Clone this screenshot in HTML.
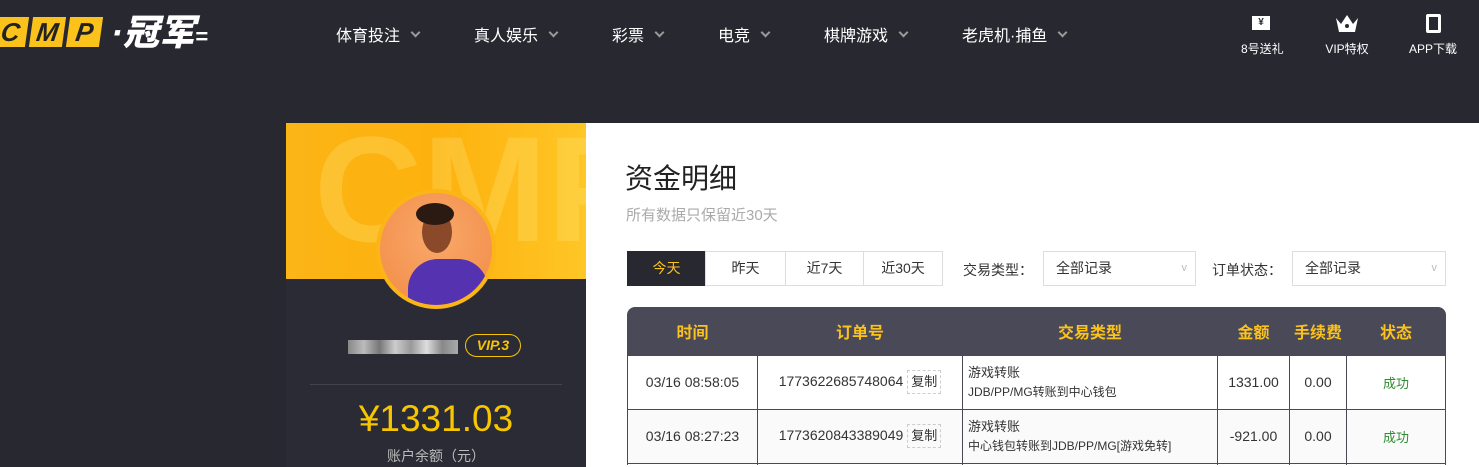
<!DOCTYPE html>
<html style="overflow:hidden;height:467px"><head><meta charset="utf-8"><style>
*{margin:0;padding:0;box-sizing:border-box}
body{width:1479px;height:467px;overflow:hidden;background:#282831;font-family:"Liberation Sans","Noto Sans CJK SC",sans-serif;position:relative}
.a{position:absolute;white-space:nowrap}
.nav{color:#fff;font-size:16px;top:22px}
.nav i{display:inline-block;width:7px;height:7px;border-right:2px solid #999;border-bottom:2px solid #999;transform:rotate(45deg);margin-left:12px;position:relative;top:-5px}
.logo b{display:inline-block;width:33px;height:30px;background:#fbc21b;color:#222;font-style:italic;font-size:26px;font-weight:900;text-align:center;line-height:30px;margin-right:4px;transform:skewX(-8deg)}
.ic{color:#fff;font-size:12px;text-align:center;top:12px}
.btn{position:absolute;top:251px;height:35px;border:1px solid #ddd;background:#fff;font-size:14px;color:#333;text-align:center;line-height:33px}
.sel{position:absolute;top:251px;height:35px;border:1px solid #ddd;font-size:14px;color:#333;line-height:33px;padding-left:12px}
.sel:after{content:"v";position:absolute;right:8px;color:#bbb;font-size:11px}
table{position:absolute;top:308px;width:819px;border-collapse:collapse;font-size:14px;color:#333}
th{color:#fbc21b;height:47px;font-size:16px;font-weight:bold}
td{border:1px solid #4a4958;height:54px;text-align:center}
td.t{text-align:left;padding-left:5px;font-size:13px;line-height:19px}
td.t small{font-size:12px}
.cp{display:inline-block;border:1px dashed #ccc;padding:0 3px;font-size:13px;line-height:22px;margin-left:4px}
.ok{color:#2e8b2e;font-size:13px}
</style></head><body>
<div class="a logo" style="left:-6px;top:17px"><b>C</b><b>M</b><b>P</b><span style="color:#fff;font-size:36px;font-weight:900;font-style:italic;margin-left:6px;vertical-align:top;line-height:32px">·冠军</span><span style="color:#fff;font-weight:900;font-size:22px;font-style:italic;vertical-align:top;line-height:40px">=</span></div>
<div class="a nav" style="left:336px">体育投注<i></i></div>
<div class="a nav" style="left:474px">真人娱乐<i></i></div>
<div class="a nav" style="left:612px">彩票<i></i></div>
<div class="a nav" style="left:718px">电竞<i></i></div>
<div class="a nav" style="left:824px">棋牌游戏<i></i></div>
<div class="a nav" style="left:962px">老虎机·捕鱼<i></i></div>
<div class="a ic" style="left:1241px;width:40px"><div style="width:18px;height:14px;background:#fff;margin:4px auto 10px;color:#282831;font-size:10px;line-height:14px;font-weight:bold">¥</div>8号送礼</div>
<div class="a ic" style="left:1322px;width:50px"><svg width="26" height="22" viewBox="0 0 26 22" style="display:block;margin:0 auto 6px"><path d="M2 6L7 12L13 3L19 12L24 6L21 20H5Z" fill="#fff"/><circle cx="13" cy="14" r="2" fill="#282831"/></svg>VIP特权</div>
<div class="a ic" style="left:1406px;width:54px"><div style="width:15px;height:19px;border:3px solid #fff;border-radius:2px;margin:2px auto 7px"></div>APP下载</div>

<div class="a" style="left:286px;top:123px;width:300px;height:344px;background:#2b2b36"></div>
<div class="a" style="left:286px;top:123px;width:300px;height:156px;background:linear-gradient(90deg,#fbb516,#fdb10d 50%,#fec626);overflow:hidden"><span style="position:absolute;left:28px;top:-20px;font-size:150px;font-weight:bold;color:rgba(255,230,120,.3)">CMP</span></div>
<div class="a" style="left:376px;top:189px;width:120px;height:120px;border-radius:50%;background:radial-gradient(circle at 50% 40%,#f9a86a,#f28a45);border:4px solid #fbb516;overflow:hidden"><div style="position:absolute;left:28px;top:66px;width:80px;height:60px;background:#5532b0;border-radius:30px 30px 0 0"></div><div style="position:absolute;left:42px;top:18px;width:30px;height:42px;background:#8a4a2a;border-radius:50%"></div><div style="position:absolute;left:36px;top:10px;width:38px;height:22px;background:#2a1a12;border-radius:50%"></div></div>
<div class="a" style="left:348px;top:340px;width:110px;height:14px;background:linear-gradient(90deg,#888,#bbb,#777,#ccc,#999,#ddd,#888,#aaa)"></div>
<div class="a" style="left:465px;top:334px;width:56px;height:23px;border:1px solid #f7c600;border-radius:12px;color:#f7c600;font-style:italic;font-weight:bold;font-size:14px;text-align:center;line-height:21px">VIP.3</div>
<div class="a" style="left:310px;top:384px;width:252px;height:1px;background:#43434f"></div>
<div class="a" style="left:286px;top:398px;width:300px;text-align:center;color:#f7c600;font-size:37px">¥1331.03</div>
<div class="a" style="left:286px;top:446px;width:300px;text-align:center;color:#bbb;font-size:14px">账户余额（元）</div>

<div class="a" style="left:586px;top:123px;width:893px;height:344px;background:#fff"></div>
<div class="a" style="left:625px;top:157px;font-size:28px;color:#222">资金明细</div>
<div class="a" style="left:626px;top:204px;font-size:15px;color:#aaa">所有数据只保留近30天</div>
<div class="btn" style="left:627px;width:79px;background:#282831;border-color:#282831;color:#fbc21b">今天</div>
<div class="btn" style="left:705px;width:81px">昨天</div>
<div class="btn" style="left:785px;width:79px">近7天</div>
<div class="btn" style="left:863px;width:80px">近30天</div>
<div class="a" style="left:963px;top:260px;font-size:14px;color:#333">交易类型：</div>
<div class="sel" style="left:1043px;width:153px">全部记录</div>
<div class="a" style="left:1212px;top:260px;font-size:14px;color:#333">订单状态：</div>
<div class="sel" style="left:1292px;width:154px">全部记录</div>

<div class="a" style="left:627px;top:307px;width:819px;height:48px;background:#4a4958;border-radius:8px 8px 0 0"></div>
<div class="a" style="left:586px;top:0;width:893px;height:467px;overflow:hidden">
<table style="left:41px">
<tr><th style="width:130px">时间</th><th style="width:205px">订单号</th><th style="width:255px">交易类型</th><th style="width:72px">金额</th><th style="width:57px">手续费</th><th>状态</th></tr>
<tr><td>03/16 08:58:05</td><td>1773622685748064<span class="cp">复制</span></td><td class="t">游戏转账<br><small>JDB/PP/MG转账到中心钱包</small></td><td>1331.00</td><td>0.00</td><td class="ok">成功</td></tr>
<tr style="background:#fafafa"><td>03/16 08:27:23</td><td>1773620843389049<span class="cp">复制</span></td><td class="t">游戏转账<br><small>中心钱包转账到JDB/PP/MG[游戏免转]</small></td><td>-921.00</td><td>0.00</td><td class="ok">成功</td></tr>
<tr><td style="height:2px;border-bottom:0"></td><td style="height:2px;border-bottom:0"></td><td style="height:2px;border-bottom:0"></td><td style="height:2px;border-bottom:0"></td><td style="height:2px;border-bottom:0"></td><td style="height:2px;border-bottom:0"></td></tr>
</table>
</div>
</body></html>
